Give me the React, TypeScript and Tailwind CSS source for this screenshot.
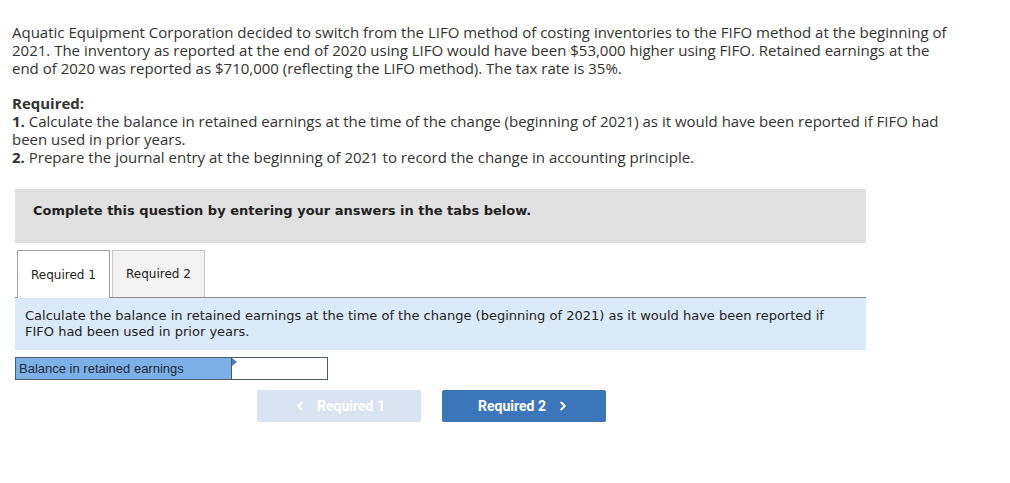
import { ChevronLeft, ChevronRight } from "lucide-react";

export default function App() {
  return (
    <div className="min-h-[483px] w-[1010px] bg-white pl-3 pt-[23px] text-[#2b2b2b]">
      <div className="w-[990px] font-['Open_Sans','Lato',sans-serif] text-[15px] leading-[18px] text-[#333]">
        <p>
          Aquatic Equipment Corporation decided to switch from the LIFO method of costing inventories to the FIFO
          method at the beginning of
          <br />
          2021. The inventory as reported at the end of 2020 using LIFO would have been $53,000 higher using FIFO.
          Retained earnings at the
          <br />
          end of 2020 was reported as $710,000 (reflecting the LIFO method). The tax rate is 35%.
        </p>
        <p className="mt-[17px] font-bold">Required:</p>
        <p>
          <span className="font-bold">1.</span> Calculate the balance in retained earnings at the time of the change
          (beginning of 2021) as it would have been reported if FIFO had
          <br />
          been used in prior years.
        </p>
        <p>
          <span className="font-bold">2.</span> Prepare the journal entry at the beginning of 2021 to record the change
          in accounting principle.
        </p>
      </div>

      <div className="ml-[3px] mt-[23px] w-[851px] font-['DejaVu_Sans','Verdana',sans-serif]">
        <div className="h-[54px] bg-[#e1e1e1] pl-[18px] pt-[14px] text-[13px] leading-[16px] font-bold text-[#222]">
          Complete this question by entering your answers in the tabs below.
        </div>

        <div className="mt-[7px] flex items-end border-b border-[#8c8c8c] pl-[2px]">
          <div className="-mb-px flex h-[48px] w-[93px] items-center justify-center border border-b-0 border-[#a0a0a0] bg-white text-[12px] text-[#222]">
            Required 1
          </div>
          <div className="ml-[2px] flex h-[47px] w-[93px] items-center justify-center border border-b-0 border-[#c8c8c8] bg-[#f3f3f3] text-[12px] text-[#222]">
            Required 2
          </div>
        </div>

        <div className="bg-[#dbeaf8] px-[10px] py-[10px] text-[13px] leading-[16px] text-[#222]">
          Calculate the balance in retained earnings at the time of the change (beginning of 2021) as it would have been
          reported if FIFO had been used in prior years.
        </div>

        <div className="mt-[7px] flex h-[23px] w-[313px] border border-[#4e5a68] font-['Liberation_Sans','Arial',sans-serif]">
          <div className="flex w-[216px] items-center border-r border-[#4e5a68] bg-[#7eb0e8] pl-[3px] text-[13px] text-[#1d2a3a]">
            Balance in retained earnings
          </div>
          <div className="relative flex-1 bg-white">
            <div className="absolute left-0 top-0 h-0 w-0 border-b-[4px] border-l-[5px] border-t-[4px] border-b-transparent border-l-[#4b7bb0] border-t-transparent" />
          </div>
        </div>

        <div className="mt-[10px] flex gap-[21px] pl-[242px] font-['Roboto','Liberation_Sans',sans-serif] text-[14px] font-bold">
          <div className="flex h-[32px] w-[164px] items-center justify-center gap-[10px] rounded-[2px] bg-[#d8e4f1] text-white">
            <ChevronLeft size={14} strokeWidth={3.5} />
            <span>Required 1</span>
          </div>
          <div className="flex h-[32px] w-[164px] items-center justify-center gap-[10px] rounded-[2px] bg-[#3b76bb] text-white">
            <span>Required 2</span>
            <ChevronRight size={14} strokeWidth={3.5} />
          </div>
        </div>
      </div>
    </div>
  );
}
